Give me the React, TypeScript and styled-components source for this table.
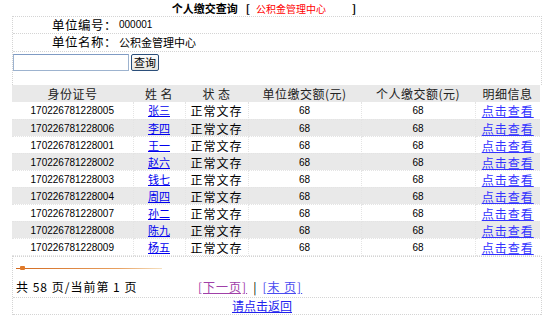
import React from "react";
import styled, { createGlobalStyle } from "styled-components";

const Global = createGlobalStyle`
  html, body { margin: 0; padding: 0; background: #fff; }
  body { font-family: "Noto Sans CJK SC", "Liberation Sans", sans-serif; color: #000; }
`;

const CJK = `"Noto Sans CJK SC", sans-serif`;
const NUM = `"Liberation Sans", "Noto Sans CJK SC", sans-serif`;
const dot = `1px dotted #d4d4d4`;

const Page = styled.div`
  width: 530px;
  margin-left: 12px;
`;

const Title = styled.div`
  height: 16px;
  line-height: 16px;
  text-align: center;
  padding-right: 26px;
  font-size: 11px;
  font-weight: bold;
  font-family: ${CJK};
  white-space: pre;
`;

const Bracket = styled.span<{ $gap: number }>`
  margin-left: ${(p) => p.$gap}px;
`;

const Red = styled.span`
  color: #ff0000;
  font-weight: normal;
  font-size: 10px;
  margin-left: 6px;
`;

const Block = styled.div`
  border-left: ${dot};
  border-right: ${dot};
  border-top: ${dot};
`;

const InfoRow = styled.div<{ $h: number }>`
  display: flex;
  align-items: center;
  height: ${(p) => p.$h}px;
  border-bottom: ${dot};
`;

const Label = styled.div`
  width: 104px;
  text-align: right;
  font-size: 12.5px;
  letter-spacing: 0.5px;
  font-family: ${CJK};
  line-height: 1;
`;

const Value = styled.div<{ $num?: boolean }>`
  font-size: ${(p) => (p.$num ? "10px" : "11px")};
  font-family: ${(p) => (p.$num ? NUM : CJK)};
  padding-left: 2px;
  line-height: 1;
`;

const SearchRow = styled.div`
  display: flex;
  align-items: flex-start;
  gap: 2px;
  padding-top: 2px;
  height: 33px;
  box-sizing: border-box;
`;

const Input = styled.input`
  width: 116px;
  height: 17px;
  box-sizing: border-box;
  border: 1px solid #9db3cf;
  border-top-color: #7f9bc4;
  margin: 0;
  padding: 0;
`;

const Btn = styled.button`
  height: 17px;
  width: 28px;
  padding: 0;
  margin: 0;
  font-size: 11px;
  font-family: ${CJK};
  line-height: 1;
  border: 1px solid #2b4e7a;
  border-radius: 2px;
  background: linear-gradient(#fdfdfd, #e6e6e0);
  color: #000;
`;

const Table = styled.table`
  border-collapse: collapse;
  width: 528px;
  table-layout: fixed;
`;

const Tr = styled.tr<{ $gray?: boolean }>`
  height: 17px;
  background: ${(p) => (p.$gray ? "#e9e9e9" : "#fff")};
`;

const Th = styled.th`
  font-weight: normal;
  font-size: 12px;
  letter-spacing: 0.5px;
  font-family: ${CJK};
  color: #222;
  padding: 0;
  line-height: 17px;
  text-align: center;
`;

const Td = styled.td<{ $kind: "num" | "cjk" | "link" | "big" }>`
  padding: 1px 0 0 0;
  text-align: center;
  line-height: 15px;
  border-bottom: 1px dotted #e4e4e4;
  border-right: 1px dotted #e4e4e4;
  font-family: ${(p) => (p.$kind === "num" ? NUM : CJK)};
  font-size: ${(p) =>
    p.$kind === "num" ? "10px" : p.$kind === "link" ? "11px" : "12px"};
  letter-spacing: ${(p) => (p.$kind === "big" ? "1px" : "0")};
  &:last-child { border-right: none; }
`;

const A = styled.a<{ $c?: string }>`
  color: ${(p) => p.$c || "#0000ee"};
  text-decoration: underline;
  cursor: pointer;
`;

const Footer = styled.div`
  border-left: ${dot};
  border-right: ${dot};
  border-top: ${dot};
`;

const BarRow = styled.div`
  height: 20px;
  display: flex;
  align-items: center;
  padding-left: 3px;
  padding-top: 3px;
  box-sizing: border-box;
`;

const Bar = styled.div`
  position: relative;
  width: 146px;
  height: 1px;
  background: linear-gradient(90deg, #d2691e, #e8a060 70%, #f5e0c0);
`;

const Knob = styled.div`
  position: absolute;
  left: 4px;
  top: -2px;
  width: 5px;
  height: 4px;
  background: #e07a2a;
  border-radius: 1px;
`;

const PagerRow = styled.div`
  display: flex;
  align-items: center;
  height: 20px;
  border-bottom: ${dot};
  font-size: 12px;
  letter-spacing: 1px;
  font-family: ${CJK};
  white-space: pre;
`;

const PageInfo = styled.div`
  width: 182px;
  padding-left: 3px;
`;

const Sep = styled.span`
  margin: 0 5px 0 6px;
`;

const BackRow = styled.div`
  height: 16px;
  line-height: 16px;
  text-align: center;
  padding-right: 30px;
  font-size: 12px;
  font-family: ${CJK};
  border-bottom: ${dot};
`;

const rows = [
  ["170226781228005", "张三"],
  ["170226781228006", "李四"],
  ["170226781228001", "王一"],
  ["170226781228002", "赵六"],
  ["170226781228003", "钱七"],
  ["170226781228004", "周四"],
  ["170226781228007", "孙二"],
  ["170226781228008", "陈九"],
  ["170226781228009", "杨五"],
];

export default function App() {
  return (
    <>
      <Global />
      <Page>
        <Title>
          个人缴交查询<Bracket $gap={8}>[</Bracket>
          <Red>公积金管理中心</Red>
          <Bracket $gap={26}>]</Bracket>
        </Title>
        <Block>
          <InfoRow $h={16}>
            <Label>单位编号：</Label>
            <Value $num>000001</Value>
          </InfoRow>
          <InfoRow $h={17}>
            <Label>单位名称：</Label>
            <Value>公积金管理中心</Value>
          </InfoRow>
          <SearchRow>
            <Input />
            <Btn>查询</Btn>
          </SearchRow>
        </Block>
        <Table>
          <colgroup>
            <col style={{ width: 121 }} />
            <col style={{ width: 52 }} />
            <col style={{ width: 63 }} />
            <col style={{ width: 113 }} />
            <col style={{ width: 114 }} />
            <col style={{ width: 65 }} />
          </colgroup>
          <thead>
            <Tr $gray>
              <Th>身份证号</Th>
              <Th>姓 名</Th>
              <Th>状 态</Th>
              <Th>单位缴交额(元)</Th>
              <Th>个人缴交额(元)</Th>
              <Th>明细信息</Th>
            </Tr>
          </thead>
          <tbody>
            {rows.map(([id, name], i) => (
              <Tr key={id} $gray={i % 2 === 1}>
                <Td $kind="num">{id}</Td>
                <Td $kind="link">
                  <A>{name}</A>
                </Td>
                <Td $kind="big">正常文存</Td>
                <Td $kind="num">68</Td>
                <Td $kind="num">68</Td>
                <Td $kind="big">
                  <A $c="#3333ff">点击查看</A>
                </Td>
              </Tr>
            ))}
          </tbody>
        </Table>
        <Footer>
          <BarRow>
            <Bar>
              <Knob />
            </Bar>
          </BarRow>
          <PagerRow>
            <PageInfo>共 58 页/当前第 1 页</PageInfo>
            <A $c="#a040a8">[下一页]</A>
            <Sep>|</Sep>
            <A $c="#4a4af0">[末 页]</A>
          </PagerRow>
          <BackRow>
            <A $c="#2222ee">请点击返回</A>
          </BackRow>
        </Footer>
      </Page>
    </>
  );
}
